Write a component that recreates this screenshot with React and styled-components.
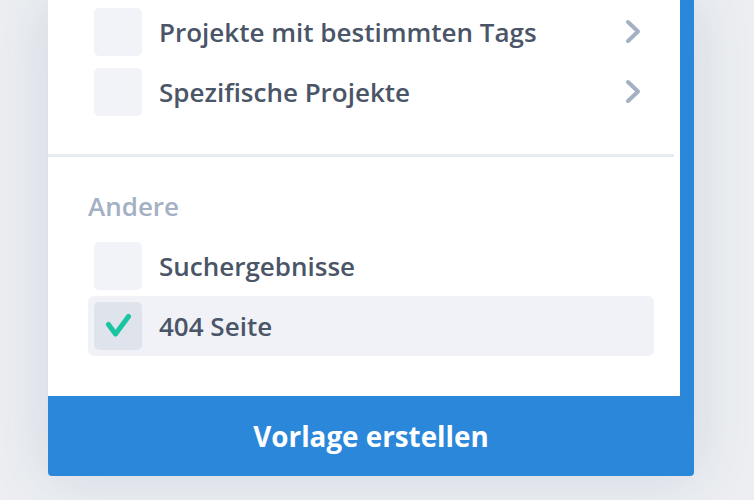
import React from "react"
import styled, { createGlobalStyle } from "styled-components"

const GlobalStyle = createGlobalStyle`
  html, body {
    margin: 0;
    padding: 0;
    background: #eceef1;
    font-family: "Open Sans", "Noto Sans", sans-serif;
    overflow: hidden;
  }
`

const Page = styled.div`
  width: 754px;
  height: 500px;
  padding-left: 48px;
  box-sizing: border-box;
`

const Modal = styled.div`
  width: 646px;
  background: #2b87da;
  border-radius: 0 0 4px 4px;
  box-shadow: 0 0 60px rgba(40, 80, 150, 0.14);
`

const Body = styled.div`
  background: #fff;
  margin-right: 14px;
  padding: 2px 0 40px;
`

const Section = styled.div`
  padding: ${props => props.padTop || "0"} 26px 0 40px;
`

const Divider = styled.div`
  height: 3px;
  background: #e7ecf3;
  margin: 32px 6px 0 0;
`

const Label = styled.div`
  font-size: 26px;
  line-height: 36px;
  font-weight: 600;
  color: #a4b0c3;
  margin-bottom: 12px;
`

const Row = styled.div`
  display: flex;
  align-items: center;
  gap: 17px;
  height: 60px;
  padding: 0 10px 0 6px;
  box-sizing: border-box;
  border-radius: 6px;
  background: ${props => (props.active ? "#f0f2f7" : "transparent")};
`

const Box = styled.div`
  width: 48px;
  height: 48px;
  flex: none;
  border-radius: 5px;
  background: ${props => (props.checked ? "#dfe3ec" : "#f1f3f8")};
  display: flex;
  align-items: center;
  justify-content: center;
`

const Text = styled.span`
  flex: 1;
  font-size: 26px;
  font-weight: 600;
  color: #4a5567;
  white-space: nowrap;
`

const Footer = styled.button`
  display: block;
  width: 100%;
  height: 80px;
  border: 0;
  background: transparent;
  color: #fff;
  font-family: "Open Sans", "Noto Sans", sans-serif;
  font-size: 27.8px;
  font-weight: 700;
  cursor: pointer;
`

const Chevron = () => (
  <svg width="20" height="28" viewBox="0 0 20 28">
    <polyline
      points="4,4 14,13.5 4,23"
      fill="none"
      stroke="#a4b0c3"
      strokeWidth="4"
      strokeLinecap="round"
      strokeLinejoin="round"
    />
  </svg>
)

const Check = () => (
  <svg width="48" height="48" viewBox="0 0 48 48">
    <polyline
      points="14.5,22.5 21.5,32 34.5,14.5"
      fill="none"
      stroke="#19c4a1"
      strokeWidth="5"
      strokeLinecap="round"
      strokeLinejoin="round"
    />
  </svg>
)

const Option = ({ label, checked, active, arrow }) => (
  <Row active={active}>
    <Box checked={checked}>{checked && <Check />}</Box>
    <Text>{label}</Text>
    {arrow && <Chevron />}
  </Row>
)

export default function App() {
  return (
    <Page>
      <GlobalStyle />
      <Modal>
        <Body>
          <Section>
            <Option label="Projekte mit bestimmten Tags" arrow />
            <Option label="Spezifische Projekte" arrow />
          </Section>
          <Divider />
          <Section padTop="31px">
            <Label>Andere</Label>
            <Option label="Suchergebnisse" />
            <Option label="404 Seite" checked active />
          </Section>
        </Body>
        <Footer>Vorlage erstellen</Footer>
      </Modal>
    </Page>
  )
}
